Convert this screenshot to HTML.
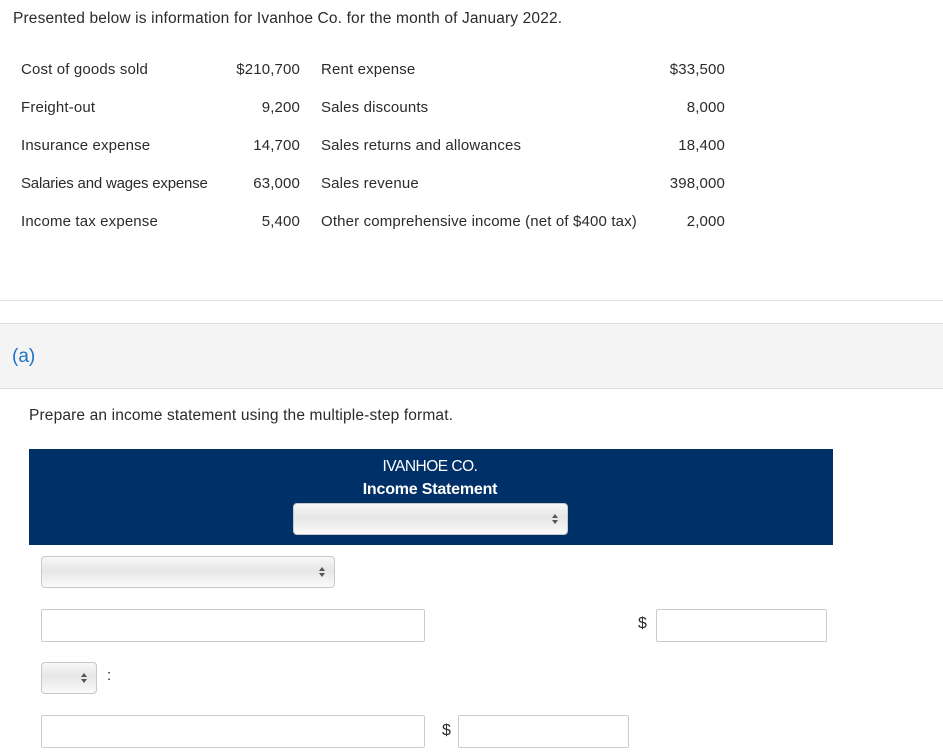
<!DOCTYPE html>
<html><head><meta charset="utf-8"><style>
body{margin:0;width:943px;height:753px;position:relative;background:#fff;font-family:"Liberation Sans",sans-serif;color:#2b2b2b;font-size:15px;letter-spacing:0.15px;overflow:hidden}
.a{position:absolute;white-space:nowrap;line-height:16px}
.r{text-align:right}
.inp{position:absolute;height:31px;border:1px solid #ccc;border-radius:2px;background:#fff;box-sizing:border-box}
.sel{position:absolute;height:32px;border:1px solid #c8c8c8;border-radius:4px;box-sizing:border-box;background:linear-gradient(#f8f8f8,#e6e6e6 45%,#fafafa)}
.sel:after{content:"";position:absolute;right:9px;top:10px;width:0;height:0;border-left:3px solid transparent;border-right:3px solid transparent;border-bottom:4px solid #555}
.sel:before{content:"";position:absolute;right:9px;top:16px;width:0;height:0;border-left:3px solid transparent;border-right:3px solid transparent;border-top:4px solid #555}
</style></head><body>
<div class="a" style="left:13px;top:11px;font-size:15.5px">Presented below is information for Ivanhoe Co. for the month of January 2022.</div>

<div class="a" style="left:21px;top:62px">Cost of goods sold</div>
<div class="a r" style="left:200px;width:100px;top:62px">$210,700</div>
<div class="a" style="left:321px;top:62px">Rent expense</div>
<div class="a r" style="left:625px;width:100px;top:62px">$33,500</div>

<div class="a" style="left:21px;top:100px">Freight-out</div>
<div class="a r" style="left:200px;width:100px;top:100px">9,200</div>
<div class="a" style="left:321px;top:100px">Sales discounts</div>
<div class="a r" style="left:625px;width:100px;top:100px">8,000</div>

<div class="a" style="left:21px;top:138px">Insurance expense</div>
<div class="a r" style="left:200px;width:100px;top:138px">14,700</div>
<div class="a" style="left:321px;top:138px">Sales returns and allowances</div>
<div class="a r" style="left:625px;width:100px;top:138px">18,400</div>

<div class="a" style="left:21px;top:176px;letter-spacing:-0.2px">Salaries and wages expense</div>
<div class="a r" style="left:200px;width:100px;top:176px">63,000</div>
<div class="a" style="left:321px;top:176px">Sales revenue</div>
<div class="a r" style="left:625px;width:100px;top:176px">398,000</div>

<div class="a" style="left:21px;top:214px">Income tax expense</div>
<div class="a r" style="left:200px;width:100px;top:214px">5,400</div>
<div class="a" style="left:321px;top:214px">Other comprehensive income (net of $400 tax)</div>
<div class="a r" style="left:625px;width:100px;top:214px">2,000</div>

<div style="position:absolute;left:0;top:300px;width:943px;height:1px;background:#ddd"></div>
<div style="position:absolute;left:0;top:323px;width:943px;height:64px;background:#f4f4f4;border-top:1px solid #ddd;border-bottom:1px solid #ddd"></div>
<div class="a" style="left:12px;top:347px;font-size:19px;line-height:20px;color:#1a73c8;letter-spacing:0">(a)</div>
<div class="a" style="left:29px;top:408px;font-size:15.5px">Prepare an income statement using the multiple-step format.</div>

<div style="position:absolute;left:29px;top:449px;width:804px;height:96px;background:#003068"></div>
<div class="a" style="left:293px;width:274px;text-align:center;top:459px;color:#fff;font-size:15.5px;letter-spacing:-0.5px">IVANHOE CO.</div>
<div class="a" style="left:293px;width:274px;text-align:center;top:482px;color:#fff;font-size:16px;font-weight:bold;letter-spacing:-0.2px">Income Statement</div>
<div class="sel" style="left:293px;top:503px;width:275px"></div>

<div class="sel" style="left:41px;top:556px;width:294px"></div>
<div class="inp" style="left:41px;top:609px;width:384px;height:33px"></div>
<div class="a" style="left:638px;top:616px;font-size:16px">$</div>
<div class="inp" style="left:656px;top:609px;width:171px;height:33px"></div>
<div class="sel" style="left:41px;top:662px;width:56px"></div>
<div class="a" style="left:107px;top:668px">:</div>
<div class="inp" style="left:41px;top:715px;width:384px;height:33px"></div>
<div class="a" style="left:442px;top:723px;font-size:16px">$</div>
<div class="inp" style="left:458px;top:715px;width:171px;height:33px"></div>
</body></html>
